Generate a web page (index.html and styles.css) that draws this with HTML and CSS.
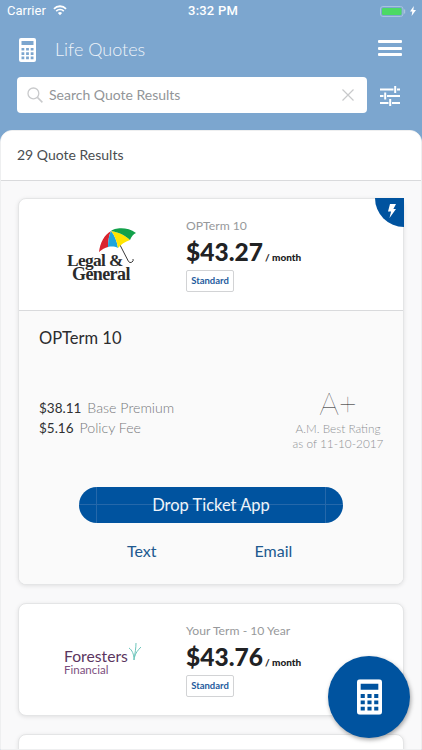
FILE: index.html
```html
<!DOCTYPE html>
<html lang="en">
<head>
<meta charset="utf-8">
<title>Life Quotes</title>
<link rel="stylesheet" href="styles.css">
</head>
<body>
<div class="screen">
  <div class="status">
    <div class="status-left">
      <span>Carrier</span>
      <svg class="wifi" viewBox="0 0 16 12"><path d="M8 11.5 5.6 8.8a3.4 3.4 0 0 1 4.8 0zM4.3 7.4 3 6a7 7 0 0 1 10 0l-1.3 1.4a5.2 5.2 0 0 0-7.4 0zM1.8 4.8.4 3.3a10.7 10.7 0 0 1 15.2 0l-1.4 1.5a8.8 8.8 0 0 0-12.4 0z" fill="#fff"/></svg>
    </div>
    <div class="status-time">3:32 PM</div>
    <div class="status-right">
      <svg class="battery" viewBox="0 0 26 11"><rect x=".5" y=".5" width="22.5" height="10" rx="2.5" fill="none" stroke="#a9c4de"/><rect x="2" y="2" width="19.5" height="7" rx="1.2" fill="#4cd964"/><rect x="24" y="3.5" width="1.2" height="4" fill="#a9c4de"/></svg>
      <svg class="bolt-small" viewBox="0 0 6 10"><path d="M3.8 0 0 5.6h2.3L1.600 10 6 4H3.400z" fill="#fff"/></svg>
    </div>
  </div>

  <header class="topbar">
    <svg class="calc-head" viewBox="0 0 17 24"><use href="#calc"/></svg>
    <h1 class="title">Life Quotes</h1>
    <div class="menu"><i></i><i></i><i></i></div>
  </header>

  <div class="searchrow">
    <div class="search">
      <svg class="s-icon" viewBox="0 0 16 16"><circle cx="6.400" cy="6.400" r="5.400" fill="none" stroke="#c9cacc" stroke-width="1.300"/><path d="m10.400 10.400 5 5" stroke="#c9cacc" stroke-width="1.500"/></svg>
      <span class="s-text">Search Quote Results</span>
      <svg class="s-clear" viewBox="0 0 12 12"><path d="m.5.5 11 11M11.500.5l-11 11" stroke="#c8c9cb" stroke-width="1.200"/></svg>
    </div>
    <svg class="filters" viewBox="0 0 20 20"><path d="M0 3.500h13.500M17 3.500h3M0 10h3.500M7 10h13M0 17h8.500M12 17h8" stroke="#fff" stroke-width="2"/><path d="M15.200 0v7M5.200 6.500v7M10.200 13v7" stroke="#fff" stroke-width="2"/></svg>
  </div>

  <main class="panel">
    <div class="count">29 Quote Results</div>
    <div class="list">
      <article class="card">
        <div class="corner"><svg viewBox="0 0 9 14"><path d="M3 0h6L6.400 5H9L2.500 14l1.600-6.500H1z" fill="#fff"/></svg></div>
        <div class="summary">
          <div class="logo lg">
            <svg class="umbrella" viewBox="0 0 38 38">
              <path d="M21 17 29.500 33.500a2.600 2.600 0 0 0 4.500-2.500" fill="none" stroke="#3a3a3a" stroke-width="1"/>
              <path d="M12 3C5 7 1 15 0 24c3-2.500 6-4.500 9-5C9 13 10 7 12 3z" fill="#d9232e"/>
              <path d="M12 3C10 7 9 13 9 19c3.500-.8 7-.5 10 1C18 13 15.500 7 12 3z" fill="#1ea5dc"/>
              <path d="M12 3c3.500 4 6 10 7 17 3-3.500 7-6.500 12-8C26 7 19 4 12 3z" fill="#ffe500"/>
              <path d="M12 3c3-3 16-5 25 2-2.500 1-4.500 3.500-6 7C26 7 19 4 12 3z" fill="#12a14a"/>
            </svg>
            <div class="lg-1">Legal &amp;</div>
            <div class="lg-2">General</div>
          </div>
          <div class="quote">
            <div class="plan">OPTerm 10</div>
            <div class="price"><b>$43.27</b><span>/ month</span></div>
            <div class="tag">Standard</div>
          </div>
        </div>
        <div class="details">
          <div class="d-title">OPTerm 10</div>
          <div class="d-mid">
            <div class="fees">
              <div><span class="amt">$38.11</span><span class="lbl">Base Premium</span></div>
              <div><span class="amt">$5.16</span><span class="lbl">Policy Fee</span></div>
            </div>
            <div class="rating">
              <div class="grade">A+</div>
              <div class="r-lbl">A.M. Best Rating<br>as of 11-10-2017</div>
            </div>
          </div>
          <div class="cta">Drop Ticket App</div>
          <div class="links"><span>Text</span><span>Email</span></div>
        </div>
      </article>

      <article class="card">
        <div class="summary">
          <div class="logo fo">
            <div class="fo-1">Foresters<svg class="sprig" viewBox="0 0 12 17"><path d="M5 17C5 11 3 7 0 5M5 17C6 10 7 5 7 0M5.500 14C6.500 10 9 7 12 4" fill="none" stroke="#6cc5bb" stroke-width="1"/></svg></div>
            <div class="fo-2">Financial</div>
          </div>
          <div class="quote">
            <div class="plan">Your Term - 10 Year</div>
            <div class="price"><b>$43.76</b><span>/ month</span></div>
            <div class="tag">Standard</div>
          </div>
        </div>
      </article>

      <article class="card"><div class="summary"></div></article>
    </div>
  </main>

  <button class="fab" type="button" aria-label="Calculator">
    <svg viewBox="0 0 17 24"><use href="#calc"/></svg>
  </button>
</div>

<svg class="defs" aria-hidden="true">
  <symbol id="calc" viewBox="0 0 17 24">
    <path fill="#fff" fill-rule="evenodd" d="M2 0h13a2 2 0 0 1 2 2v20a2 2 0 0 1-2 2H2a2 2 0 0 1-2-2V2a2 2 0 0 1 2-2zM2.500 3v4h12V3zM2.500 10v2.600h2.800V10zm4.600 0v2.600h2.800V10zm4.600 0v2.600h2.800V10zM2.500 14.300v2.600h2.800v-2.600zm4.600 0v2.600h2.800v-2.600zm4.600 0v2.600h2.800v-2.600zM2.500 18.600v2.600h2.800v-2.600zm4.600 0v2.600h2.800v-2.600zm4.600 0v2.600h2.800v-2.600z"/>
  </symbol>
</svg>
</body>
</html>
```

FILE: styles.css
```css
* { box-sizing: border-box; }
html, body { margin: 0; height: 100%; }
body { font-family: Lato, "Liberation Sans", sans-serif; overflow: hidden; }
.defs { position: absolute; width: 0; height: 0; }

.screen {
  position: relative;
  width: 422px;
  height: 750px;
  overflow: hidden;
  background: #7ca6cf;
  display: flex;
  flex-direction: column;
}

.status {
  height: 22px;
  padding: 0 6px 0 7px;
  display: flex;
  align-items: center;
  justify-content: space-between;
  color: #fff;
  font: 13px/24px Roboto, "Liberation Sans", sans-serif;
}
.status-left { flex: 1; display: flex; align-items: center; gap: 7px; }
.status-time { font-weight: 500; font-size: 13px; letter-spacing: .2px; margin-left: 3px; }
.status-right { flex: 1; display: flex; justify-content: flex-end; align-items: center; gap: 4px; }
.wifi { width: 14px; height: 11px; margin-top: -2px; }
.battery { width: 26px; height: 11px; }
.bolt-small { width: 6px; height: 10px; }

.topbar {
  height: 55px;
  padding: 0 20px 0 19px;
  display: flex;
  align-items: center;
}
.calc-head { width: 17px; height: 24px; }
.title {
  margin: -2px 0 0 19px;
  flex: 1;
  font-size: 18px;
  font-weight: 300;
  color: #eef3f9;
}
.menu { width: 24px; margin-top: -3px; display: flex; flex-direction: column; gap: 3.500px; }
.menu i { display: block; height: 3px; background: #fff; border-radius: 1px; }

.searchrow {
  height: 36px;
  padding-left: 17px;
  display: flex;
  align-items: center;
}
.search {
  width: 350px;
  height: 36px;
  background: #fff;
  border-radius: 4px;
  display: flex;
  align-items: center;
  padding: 0 13px 0 10px;
}
.s-icon { width: 16px; height: 16px; }
.s-text { flex: 1; margin: -2px 0 0 6px; font-size: 14px; color: #929598; }
.s-clear { width: 12px; height: 12px; }
.filters { width: 20px; height: 20px; margin-left: 13px; margin-top: 1px; }

.panel {
  margin-top: 17px;
  flex: 1;
  background: #f9f9fa;
  border: 1px solid #eeeff0;
  border-radius: 12px 12px 0 0;
  overflow: hidden;
}
.count {
  height: 50px;
  padding-left: 16px;
  background: #fff;
  border-bottom: 1px solid #d9dadc;
  font-size: 14px;
  line-height: 48px;
  color: #4a4d50;
}
.list {
  padding: 17px 17px 0;
  display: flex;
  flex-direction: column;
  gap: 18px;
}
.card {
  position: relative;
  background: #fff;
  border: 1px solid #e4e5e6;
  border-radius: 8px;
  box-shadow: 0 1px 4px rgba(0,0,0,.1);
  flex: none;
}
.corner {
  position: absolute;
  top: -1px;
  right: -1px;
  width: 29px;
  height: 29px;
  background: #00539f;
  border-bottom-left-radius: 29px;
  padding: 6px 0 0 12px;
}
.corner svg { display: block; width: 9px; height: 14px; }

.summary {
  height: 111px;
  display: flex;
  align-items: center;
}
.logo { width: 167px; flex: none; }
.lg { position: relative; height: 111px; }
.umbrella { position: absolute; left: 80px; top: 29px; width: 38px; height: 38px; }
.lg-1, .lg-2 {
  position: absolute;
  font-family: "Liberation Serif", serif;
  font-weight: 700;
  letter-spacing: -.6px;
  color: #2b2b2b;
  white-space: nowrap;
}
.lg-1 { left: 48px; top: 54px; font-size: 17.300px; line-height: 15px; }
.lg-2 { left: 53px; top: 68px; font-size: 18px; line-height: 14px; }

.fo { padding-left: 45px; color: #5b3560; margin-top: 4px; }
.fo-1 { display: flex; font-size: 15.700px; line-height: 19px; height: 17px; }
.sprig { width: 12px; height: 17px; margin: -4px 0 0 1px; }
.fo-2 { font-size: 11.500px; line-height: 12px; color: #7d4f7e; }

.quote { display: flex; flex-direction: column; align-items: flex-start; }
.plan { font-size: 12.200px; line-height: 16px; color: #97999b; }
.price { margin-top: 2px; height: 32px; display: flex; align-items: baseline; line-height: 32px; color: #212224; }
.price b { font-size: 24.500px; font-weight: 900; }
.price span { margin-left: 2px; font-size: 10px; font-weight: 900; }
.tag {
  margin-top: 2px;
  height: 22px;
  width: 48px;
  border: 1px solid #d2d3d5;
  border-radius: 2px;
  text-align: center;
  font-size: 9.500px;
  font-weight: 700;
  line-height: 20px;
  color: #1f5c9e;
}

.details {
  height: 274px;
  background: #fafafa;
  border-top: 1px solid #d9dadc;
  border-radius: 0 0 7px 7px;
  padding: 16px 20px 0;
  display: flex;
  flex-direction: column;
}
.d-title { font-size: 16.500px; line-height: 22px; color: #2b2c2e; }
.d-mid {
  margin-top: 37px;
  height: 66px;
  display: flex;
  justify-content: space-between;
}
.fees { margin-top: 12px; font-size: 13.500px; line-height: 20px; color: #2f3032; }
.amt { margin-right: 6px; }
.lbl { font-weight: 300; color: #76787b; font-size: 14.200px; }
.rating { width: 92px; margin-right: -1px; text-align: center; }
.grade { font-size: 31px; font-weight: 200; line-height: 34px; height: 34px; color: #0c0c0e; }
.r-lbl { margin-top: 2px; font-size: 11.800px; font-weight: 300; line-height: 14.500px; color: #8f9194; white-space: nowrap; }

.cta {
  margin: 35px 40px 0;
  height: 36px;
  border-radius: 18px;
  color: #eef3f9;
  text-align: center;
  font-size: 16.500px;
  line-height: 37px;
  background:
    linear-gradient(#2568aa, #2568aa) 0 17px / 100% 1px no-repeat,
    linear-gradient(#2568aa, #2568aa) 17px 0 / 1px 100% no-repeat,
    linear-gradient(#2568aa, #2568aa) 246px 0 / 1px 100% no-repeat,
    #00539f;
}
.links {
  margin-top: 18px;
  padding-left: 88px;
  display: flex;
  gap: 98px;
  font-size: 16px;
  line-height: 20px;
  color: #20598f;
}

.fab {
  position: absolute;
  left: 328px;
  top: 656px;
  width: 82px;
  height: 82px;
  border: 0;
  padding: 0;
  border-radius: 50%;
  background: #00539f;
  box-shadow: 1px 2px 4px rgba(0,0,0,.35);
  display: flex;
  align-items: center;
  justify-content: center;
}
.fab svg { width: 25px; height: 36px; }
```
